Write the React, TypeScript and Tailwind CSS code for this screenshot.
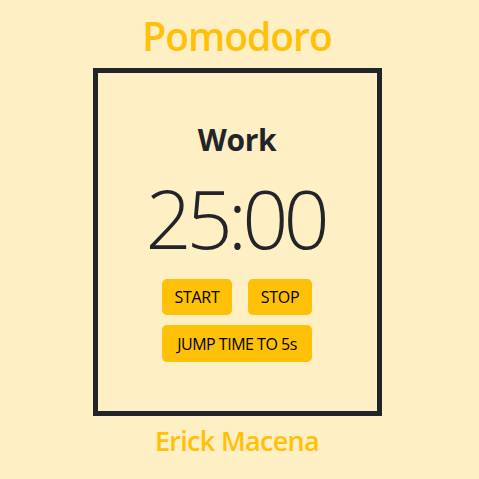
import React from "react";

export default function App() {
  const font = { fontFamily: '"Open Sans", "Noto Sans", sans-serif' };
  return (
    <div
      className="w-full min-h-[479px] bg-[#ffefc5] flex flex-col items-center pr-[5px]"
      style={font}
    >
      <h1 className="mt-[12px] text-[39px] leading-[48px] font-semibold text-[#ffc107] tracking-[-1px]">
        Pomodoro
      </h1>
      <div className="mt-[8px] w-[289px] h-[348px] border-[5px] border-[#212529] flex flex-col items-center pt-[47px]">
        <h2 className="text-[30px] leading-[40px] font-bold text-[#212529] tracking-[-0.3px]">Work</h2>
        <div className="mt-[10px] text-[81px] leading-[96px] font-light text-[#212529] tracking-[-5px] pr-[4px]">
          25:00
        </div>
        <div className="mt-[13px] w-[150px] flex flex-col gap-[10px]">
          <div className="flex justify-between">
            <button className="w-[70px] h-[36px] bg-[#ffc107] rounded-[5px] text-[16px] text-black tracking-[-0.3px]">
              START
            </button>
            <button className="w-[64px] h-[36px] bg-[#ffc107] rounded-[5px] text-[16px] text-black tracking-[-0.3px]">
              STOP
            </button>
          </div>
          <button className="w-full h-[37px] bg-[#ffc107] rounded-[5px] text-[16px] text-black tracking-[-0.5px]">
            JUMP TIME TO 5s
          </button>
        </div>
      </div>
      <div className="mt-[7px] text-[27px] leading-[36px] font-semibold text-[#ffc107] tracking-[-0.7px]">
        Erick Macena
      </div>
    </div>
  );
}
